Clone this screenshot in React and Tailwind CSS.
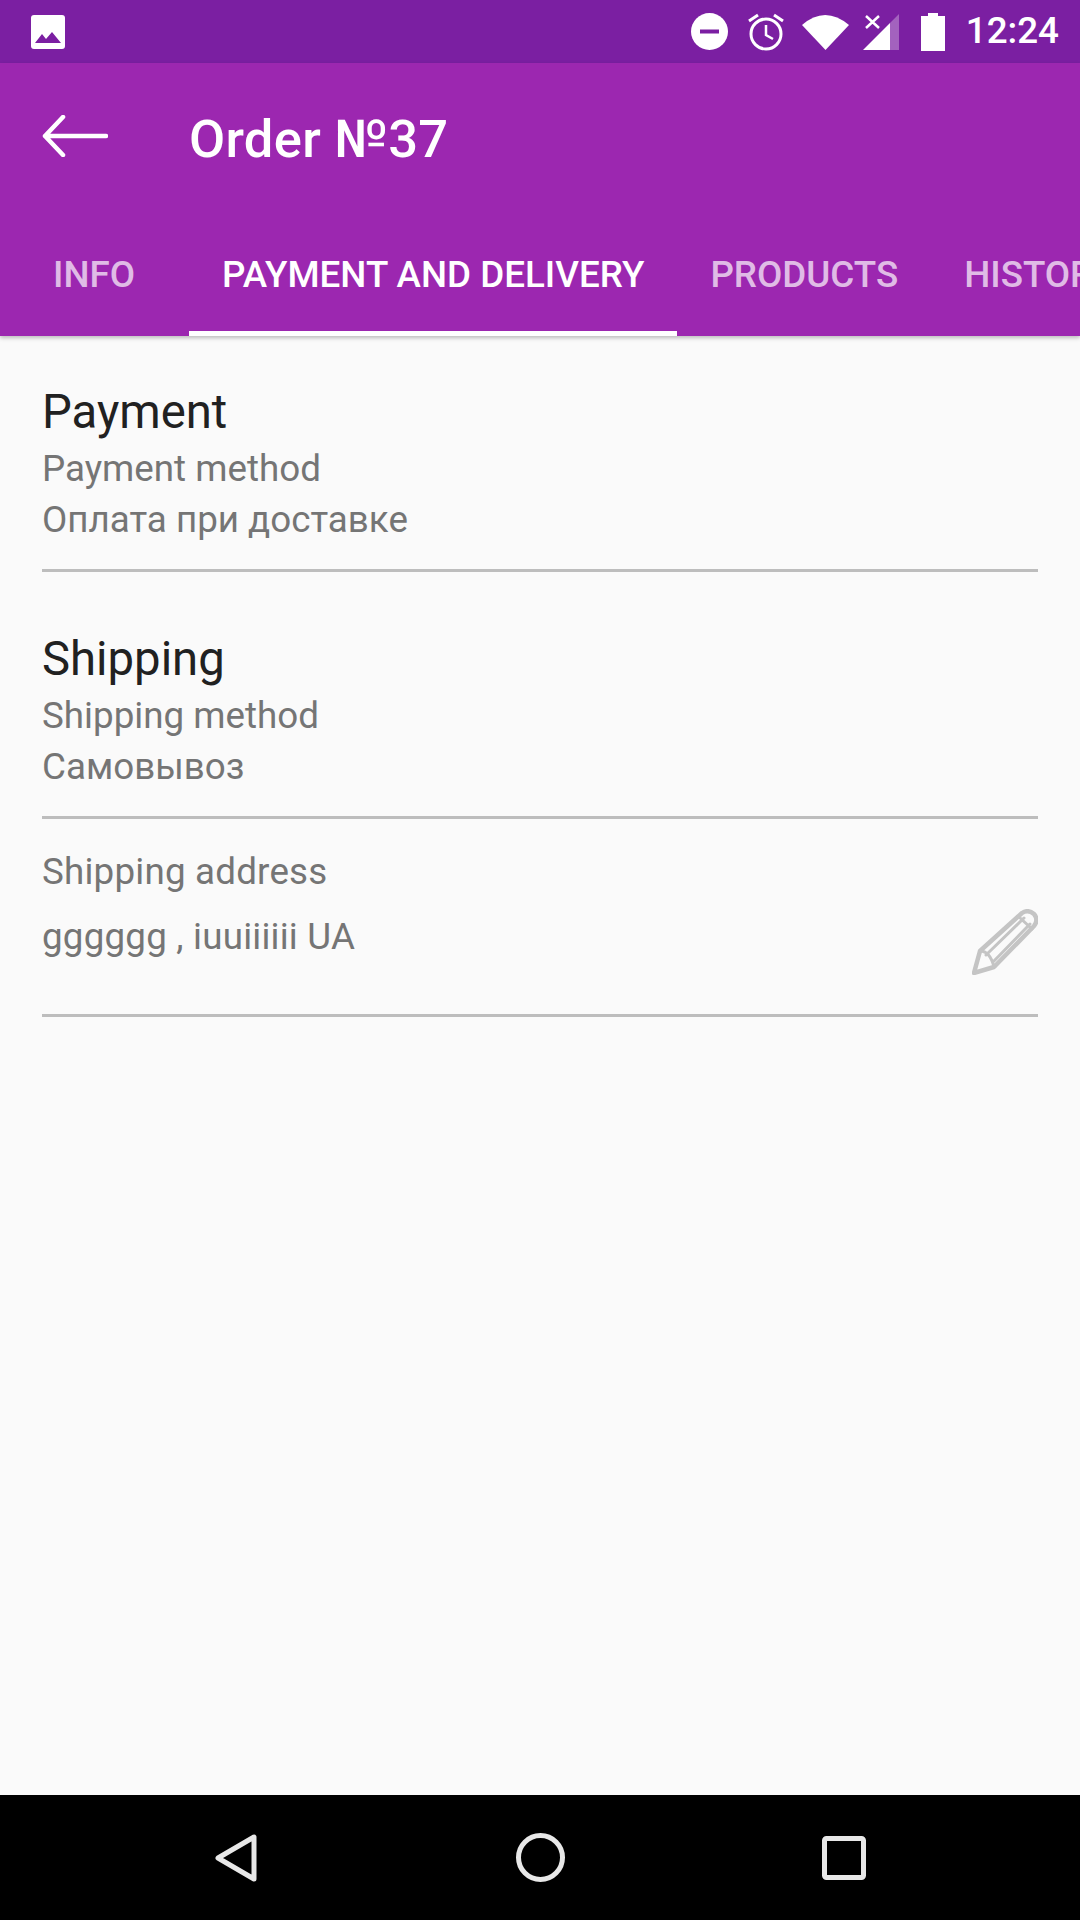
const tabs = [
  { name: "INFO", active: false, wide: true },
  { name: "PAYMENT AND DELIVERY", active: true },
  { name: "PRODUCTS", active: false },
  { name: "HISTORY", active: false },
];

const StatusBar = () => (
  <div className="h-[63px] shrink-0 bg-[#7b1fa2] flex items-center justify-between pl-[31px] pr-[21px]">
    <svg width="34" height="34" viewBox="0 0 34 34">
      <rect width="34" height="34" rx="3" fill="#fff" />
      <path d="M4 28 L11 19 L15 24 L21 17 L30 28 Z" fill="#7b1fa2" />
    </svg>
    <div className="flex items-center">
      <svg width="37" height="37" viewBox="0 0 37 37">
        <circle cx="18.5" cy="18.5" r="18.5" fill="#fff" />
        <rect x="9" y="16.5" width="19" height="4" fill="#7b1fa2" />
      </svg>
      <svg width="38" height="38" viewBox="0 0 38 38" className="ml-[19px]" fill="none" stroke="#fff">
        <circle cx="19" cy="21" r="15" strokeWidth="3" />
        <path d="M19 12 V22 L26 26" strokeWidth="2.5" />
        <path d="M2 8 L11 2 M36 8 L27 2" strokeWidth="3" />
      </svg>
      <svg width="47" height="37" viewBox="0 0 47 37" className="ml-[17px]">
        <path d="M0 12 Q23 -8 47 12 L23.5 37 Z" fill="#fff" />
      </svg>
      <svg width="36" height="37" viewBox="0 0 36 37" className="ml-[14px]">
        <path d="M0 37 L27 10 V37 Z" fill="#fff" />
        <path d="M27 10 L36 1 V37 H27 Z" fill="#fff" fillOpacity="0.3" />
        <path d="M3 3 L16 15 M16 3 L3 15" stroke="#fff" strokeWidth="2.5" />
      </svg>
      <svg width="24" height="38" viewBox="0 0 24 38" className="ml-[22px]">
        <path d="M7 0 H17 V3 H24 V38 H0 V3 H7 Z" fill="#fff" />
      </svg>
      <span className="ml-[21px] text-[36.75px] leading-none font-medium text-white">12:24</span>
    </div>
  </div>
);

const AppBar = () => (
  <div className="shrink-0 h-[273px] bg-[#9c27b0] shadow-[0_2px_4px_rgba(0,0,0,0.25)] relative z-10 flex flex-col">
    <div className="h-[147px] flex items-center shrink-0">
      <svg width="66" height="42" viewBox="0 0 66 42" className="ml-[42px] mt-[-1px]" fill="none" stroke="#fff" strokeWidth="4.5" strokeLinecap="round" strokeLinejoin="round">
        <path d="M64 21 H3 M21 2 L3 21 L21 40" />
      </svg>
      <h1 className="ml-[81px] mt-[5px] text-[52.5px] leading-none font-medium text-white tracking-[0.3px]">Order №37</h1>
    </div>
    {/* Tab strip is scrolled slightly, so HISTORY runs off the right edge */}
    <div className="flex-1 flex overflow-hidden">
      {tabs.map((tab) => (
        <div
          key={tab.name}
          className={`shrink-0 flex items-center pt-[8px] border-b-[5px] text-[36.75px] font-medium ${
            tab.wide ? "w-[189px] pl-[53px]" : "px-[33px]"
          } ${tab.active ? "text-white border-white" : "text-white/70 border-transparent"}`}
        >
          {tab.name}
        </div>
      ))}
    </div>
  </div>
);

const Section = ({ title, label, value, className = "" }) => (
  <div className={`pt-[45px] h-[236px] border-b-[3px] border-[#bdbdbd] ${className}`}>
    <div className="text-[47.25px] leading-[62px] text-[#212121]">{title}</div>
    <div className="text-[36.75px] leading-[51px] text-[#757575]">{label}</div>
    <div className="text-[36.75px] leading-[51px] text-[#757575]">{value}</div>
  </div>
);

const App = () => {
  return (
    <div className="w-[1080px] h-[1920px] flex flex-col bg-[#fafafa] overflow-hidden font-['Roboto',sans-serif]">
      <StatusBar />
      <AppBar />
      <div className="flex-1 px-[42px]">
        <Section title="Payment" label="Payment method" value="Оплата при доставке" />
        <Section title="Shipping" label="Shipping method" value="Самовывоз" className="mt-[11px]" />
        <div className="h-[198px] pt-[27px] border-b-[3px] border-[#bdbdbd] text-[36.75px] text-[#757575] flex items-start justify-between">
          <div className="tracking-[0.2px]">
            <div className="leading-[51px]">Shipping address</div>
            <div className="leading-[51px] mt-[14px]">gggggg , iuuiiiiii UA</div>
          </div>
          <svg width="66" height="66" viewBox="0 0 66 66" className="mt-[63px]" fill="none" stroke="#c4c4c4" strokeWidth="4.5" strokeLinejoin="round" strokeLinecap="round">
            <path d="M2 64 L8 42 L50 4 Q56 0 62 5 Q67 11 62 17 L22 58 Z" />
            <path d="M8 42 Q18 42 22 58 M14 46 L52 9 M22 52 L58 15 M46 7 L60 20" strokeWidth="3" />
          </svg>
        </div>
      </div>
      <div className="h-[125px] shrink-0 bg-black flex items-center">
        <svg width="42" height="48" viewBox="0 0 42 48" className="ml-[215px]" fill="none" stroke="#e8e8e8" strokeWidth="5" strokeLinejoin="round">
          <path d="M39 3 V45 L3 24 Z" />
        </svg>
        <svg width="49" height="49" viewBox="0 0 49 49" className="ml-[259px]" fill="none" stroke="#e8e8e8" strokeWidth="5">
          <circle cx="24.5" cy="24.5" r="22" />
        </svg>
        <svg width="44" height="44" viewBox="0 0 44 44" className="ml-[257px]" fill="none" stroke="#e8e8e8" strokeWidth="5">
          <rect x="2.5" y="2.5" width="39" height="39" rx="2" />
        </svg>
      </div>
    </div>
  );
};

export default App;
